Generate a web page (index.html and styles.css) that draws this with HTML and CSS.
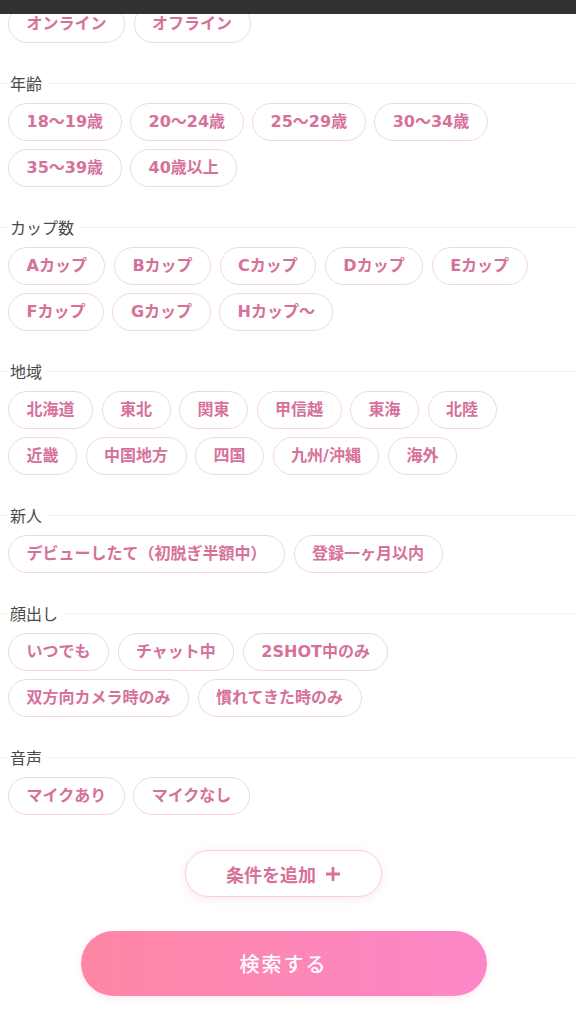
FILE: index.html
```html
<!DOCTYPE html>
<html lang="ja">
<head>
<meta charset="utf-8">
<link rel="stylesheet" href="styles.css">
</head>
<body>
<div class="topbar"></div>
<main class="page">
  <div class="chips">
    <span class="chip">オンライン</span>
    <span class="chip">オフライン</span>
  </div>

  <section class="section">
    <h2 class="heading"><span>年齢</span></h2>
    <div class="chips">
      <span class="chip">18〜19歳</span>
      <span class="chip">20〜24歳</span>
      <span class="chip">25〜29歳</span>
      <span class="chip">30〜34歳</span>
      <span class="chip">35〜39歳</span>
      <span class="chip">40歳以上</span>
    </div>
  </section>

  <section class="section">
    <h2 class="heading"><span>カップ数</span></h2>
    <div class="chips">
      <span class="chip">Aカップ</span>
      <span class="chip">Bカップ</span>
      <span class="chip">Cカップ</span>
      <span class="chip">Dカップ</span>
      <span class="chip">Eカップ</span>
      <span class="chip">Fカップ</span>
      <span class="chip">Gカップ</span>
      <span class="chip">Hカップ〜</span>
    </div>
  </section>

  <section class="section">
    <h2 class="heading"><span>地域</span></h2>
    <div class="chips">
      <span class="chip">北海道</span>
      <span class="chip">東北</span>
      <span class="chip">関東</span>
      <span class="chip">甲信越</span>
      <span class="chip">東海</span>
      <span class="chip">北陸</span>
      <span class="chip">近畿</span>
      <span class="chip">中国地方</span>
      <span class="chip">四国</span>
      <span class="chip">九州/沖縄</span>
      <span class="chip">海外</span>
    </div>
  </section>

  <section class="section">
    <h2 class="heading"><span>新人</span></h2>
    <div class="chips">
      <span class="chip">デビューしたて（初脱ぎ半額中）</span>
      <span class="chip">登録一ヶ月以内</span>
    </div>
  </section>

  <section class="section">
    <h2 class="heading"><span>顔出し</span></h2>
    <div class="chips">
      <span class="chip">いつでも</span>
      <span class="chip">チャット中</span>
      <span class="chip">2SHOT中のみ</span>
      <span class="chip">双方向カメラ時のみ</span>
      <span class="chip">慣れてきた時のみ</span>
    </div>
  </section>

  <section class="section">
    <h2 class="heading"><span>音声</span></h2>
    <div class="chips">
      <span class="chip">マイクあり</span>
      <span class="chip">マイクなし</span>
    </div>
  </section>

  <div class="actions">
    <button class="add-btn" type="button">条件を追加
      <svg class="plus" viewBox="0 0 16 16" width="16" height="16" aria-hidden="true">
        <path d="M8 1V15M1 8H15" stroke="#d6719a" stroke-width="2.8" stroke-linecap="butt" fill="none"/>
      </svg>
    </button>
    <button class="search-btn" type="button">検索する</button>
  </div>
</main>
</body>
</html>
```

FILE: styles.css
```css
html, body {
  margin: 0;
  padding: 0;
  background: #ffffff;
}

body {
  font-family: "Noto Sans CJK JP", "Noto Sans", sans-serif;
  width: 576px;
  min-height: 1024px;
}

.topbar {
  position: fixed;
  top: 0;
  left: 0;
  right: 0;
  height: 14px;
  background: #2f3133;
  z-index: 10;
}

.page {
  padding-top: 5px;
}

.chips {
  display: flex;
  flex-wrap: wrap;
  gap: 8px 8.5px;
  padding: 0 8px;
}

.chip {
  box-sizing: border-box;
  height: 38px;
  display: inline-flex;
  align-items: center;
  padding: 0 17.5px;
  border: 1.5px solid #f7d5e0;
  border-radius: 19px;
  color: #d6719a;
  font-family: "DejaVu Sans", "Noto Sans CJK JP", sans-serif;
  font-size: 16px;
  font-weight: 700;
  line-height: 1;
  white-space: nowrap;
  background: #fff;
}

.section {
  margin-top: 30px;
}

.section:first-of-type {
  margin-top: 30px;
}

.heading {
  display: flex;
  align-items: center;
  margin: 0 0 10px;
  height: 20px;
  font-family: "Noto Sans CJK JP", sans-serif;
  font-size: 16px;
  font-weight: 400;
  color: #4a4a4a;
  line-height: 20px;
}

.heading::before {
  content: "";
  width: 8px;
  height: 1px;
  background: #f2f2f2;
}

.heading span {
  padding: 0 6px 0 2px;
}

.heading::after {
  content: "";
  flex: 1;
  height: 1px;
  background: #f2f2f2;
}

.actions {
  display: flex;
  flex-direction: column;
  align-items: center;
  padding-right: 9px;
  margin-top: 35px;
  gap: 34px;
}

.add-btn {
  box-sizing: border-box;
  width: 197px;
  height: 47px;
  border: 1px solid #f6d3de;
  border-radius: 24px;
  background: #fff;
  box-shadow: 0 2px 8px rgba(248, 160, 190, 0.28);
  color: #d6719a;
  font-family: "Noto Sans CJK JP", sans-serif;
  font-size: 18px;
  font-weight: 700;
  display: flex;
  align-items: center;
  justify-content: center;
  gap: 9px;
  padding: 0;
}

.plus {
  display: block;
}

.search-btn {
  box-sizing: border-box;
  width: 406px;
  height: 65px;
  border: none;
  border-radius: 33px;
  background: linear-gradient(90deg, #fe86a3 0%, #fb87c8 100%);
  box-shadow: 0 2px 6px rgba(250, 140, 180, 0.2);
  color: #ffffff;
  font-family: "Noto Sans CJK JP", sans-serif;
  font-size: 20px;
  font-weight: 500;
  letter-spacing: 2px;
  padding: 0;
}
```
